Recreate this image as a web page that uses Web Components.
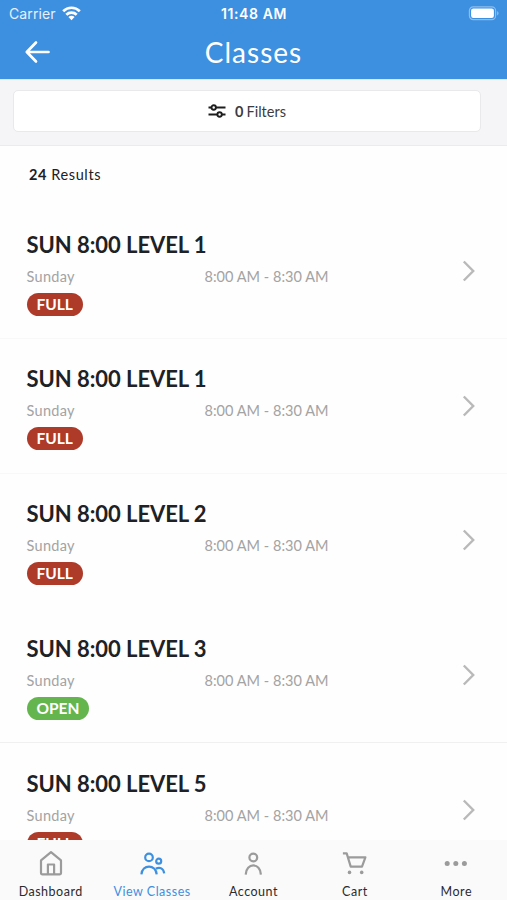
<!DOCTYPE html>
<html lang="en">
<head>
<meta charset="utf-8">
<meta name="viewport" content="width=device-width, initial-scale=1">
<title>Classes</title>
<style>
	html, body {
		height: 100%;
	}
	body {
		margin: 0;
		overflow: hidden;
		background: #fefefe;
		color: #202124;
		font-family: Lato, "Noto Sans", sans-serif;
	}
</style>
</head>
<body>
<classes-app>
	<status-bar slot="header" carrier="Carrier" time="11:48 AM"></status-bar>
	<page-header slot="header">Classes</page-header>
	<filter-bar slot="header" count="0"></filter-bar>
	<result-count count="24"></result-count>
	<class-row day="Sunday" time="8:00 AM - 8:30 AM" status="full">SUN 8:00 LEVEL 1</class-row>
	<class-row day="Sunday" time="8:00 AM - 8:30 AM" status="full">SUN 8:00 LEVEL 1</class-row>
	<class-row day="Sunday" time="8:00 AM - 8:30 AM" status="full" plain>SUN 8:00 LEVEL 2</class-row>
	<class-row day="Sunday" time="8:00 AM - 8:30 AM" status="open">SUN 8:00 LEVEL 3</class-row>
	<class-row day="Sunday" time="8:00 AM - 8:30 AM" status="full">SUN 8:00 LEVEL 5</class-row>
	<tab-bar slot="footer">
		<tab-item icon="home">Dashboard</tab-item>
		<tab-item icon="people" active>View Classes</tab-item>
		<tab-item icon="person">Account</tab-item>
		<tab-item icon="cart">Cart</tab-item>
		<tab-item icon="more">More</tab-item>
	</tab-bar>
</classes-app>

<script>
class ClassesApp extends HTMLElement {
	constructor() {
		super()
		this.attachShadow({ mode: 'open' })
		this.shadowRoot.innerHTML = `
		<slot name='header'></slot>
		<main><slot></slot></main>
		<slot name='footer'></slot>
		<style>
		:host {
			display: flex;
			flex-direction: column;
			height: 100vh;
		}
		main {
			flex: 1;
			min-height: 0;
			overflow: hidden;
		}
		</style>
		`
	}
}
window.customElements.define('classes-app', ClassesApp)

class StatusBar extends HTMLElement {
	constructor() {
		super()
		this.attachShadow({ mode: 'open' })
	}
	connectedCallback() {
		this.shadowRoot.innerHTML = `
		<div class='left'>
			<span class='carrier'>${this.getAttribute('carrier')}</span>
			<svg width='19' height='15' viewBox='0 0 19 15' fill='none' stroke='#fff' stroke-width='2.7'>
				<path d='M1.2 5.2C5.8 .6 13.2 .6 17.8 5.2'/>
				<path d='M4.3 8.7C7.2 5.9 11.8 5.9 14.7 8.7'/>
				<path d='M9.5 14.2L6.4 11C8.2 9.4 10.8 9.4 12.6 11Z' fill='#fff' stroke='none'/>
			</svg>
		</div>
		<span class='time'>${this.getAttribute('time')}</span>
		<svg class='battery' width='31' height='15' viewBox='0 0 31 15'>
			<rect x='1.4' y='.9' width='26.2' height='12.7' rx='3.8' fill='none' stroke='#8dbdec' stroke-width='1.2'/>
			<rect x='3.1' y='2.6' width='22.8' height='9.3' rx='2.2' fill='#fff'/>
			<path d='M29.1 5.2C31 5.8 31 8.8 29.1 9.4Z' fill='#8dbdec'/>
		</svg>
		<style>
		:host {
			display: grid;
			grid-template-columns: 1fr auto 1fr;
			align-items: center;
			height: 27px;
			padding: 0 8px 0 9px;
			box-sizing: border-box;
			background: #3d8fdf;
			color: #fff;
			font-family: Inter, "Liberation Sans", sans-serif;
			font-size: 14px;
		}
		.left {
			display: flex;
			align-items: center;
			gap: 6px;
		}
		.carrier {
			color: #e6f1fc;
			letter-spacing: .1px;
		}
		.time {
			font-size: 14px;
			font-weight: 600;
			letter-spacing: .6px;
		}
		.battery {
			justify-self: end;
		}
		</style>
		`
	}
}
window.customElements.define('status-bar', StatusBar)

class PageHeader extends HTMLElement {
	constructor() {
		super()
		this.attachShadow({ mode: 'open' })
		this.shadowRoot.innerHTML = `
		<svg width='26' height='24' viewBox='0 0 26 24' fill='none' stroke='#fff' stroke-width='2.7' stroke-linecap='round' stroke-linejoin='round'>
			<path d='M12 2.5L2.8 12L12 21.5M3 12H24.5'/>
		</svg>
		<h1><slot></slot></h1>
		<style>
		:host {
			display: grid;
			grid-template-columns: 1fr auto 1fr;
			align-items: center;
			height: 52px;
			padding: 0 24px 3px;
			box-sizing: border-box;
			background: #3d8fdf;
			color: #fff;
		}
		h1 {
			margin: 0;
			font-size: 28px;
			font-weight: 400;
			letter-spacing: 1px;
		}
		</style>
		`
	}
}
window.customElements.define('page-header', PageHeader)

class FilterBar extends HTMLElement {
	constructor() {
		super()
		this.attachShadow({ mode: 'open' })
	}
	connectedCallback() {
		this.shadowRoot.innerHTML = `
		<div class='button'>
			<svg width='18' height='14' viewBox='0 0 18 14' fill='#fff' stroke='#1d1d1d' stroke-width='1.9'>
				<path d='M.5 3.5H17.5M.5 10.5H17.5'/>
				<circle cx='5.7' cy='3.5' r='2.2'/>
				<circle cx='11.6' cy='10.5' r='2.2'/>
			</svg>
			<span><b>${this.getAttribute('count')}</b> <i>Filters</i></span>
		</div>
		<style>
		:host {
			display: block;
			height: 67px;
			padding: 10px 26px 13px 13px;
			box-sizing: border-box;
			border-top: 1px solid #d3eafa;
			border-bottom: 1px solid #ebebec;
			background: #f5f5f8;
		}
		.button {
			display: flex;
			align-items: center;
			justify-content: center;
			gap: 9px;
			height: 42px;
			box-sizing: border-box;
			border: 1px solid #e9e9ec;
			border-radius: 5px;
			background: #fff;
			color: #3c3c3f;
			font-size: 14.5px;
		}
		span {
			display: flex;
			gap: 3px;
		}
		i {
			font-style: normal;
		}
		</style>
		`
	}
}
window.customElements.define('filter-bar', FilterBar)

class ResultCount extends HTMLElement {
	constructor() {
		super()
		this.attachShadow({ mode: 'open' })
	}
	connectedCallback() {
		this.shadowRoot.innerHTML = `
		<b>${this.getAttribute('count')}</b> Results
		<style>
		:host {
			display: block;
			height: 58px;
			padding-left: 29px;
			box-sizing: border-box;
			line-height: 57px;
			font-size: 14.5px;
			letter-spacing: .6px;
		}
		</style>
		`
	}
}
window.customElements.define('result-count', ResultCount)

class ClassRow extends HTMLElement {
	constructor() {
		super()
		this.attachShadow({ mode: 'open' })
	}
	connectedCallback() {
		const status = this.getAttribute('status')
		this.shadowRoot.innerHTML = `
		<div class='info'>
			<h2><slot></slot></h2>
			<div class='when'>
				<span>${this.getAttribute('day')}</span>
				<span class='hours'>${this.getAttribute('time')}</span>
			</div>
			<span class='badge ${status}'>${status.toUpperCase()}</span>
		</div>
		<svg width='14' height='22' viewBox='0 0 14 22' fill='none' stroke='#b9b9b9' stroke-width='2.4'>
			<path d='M1.8 1.5L11.2 11L1.8 20.5'/>
		</svg>
		<style>
		:host {
			display: flex;
			align-items: center;
			justify-content: space-between;
			height: 134.75px;
			padding: 0 31px 0 26.5px;
			box-sizing: border-box;
			border-bottom: 1px solid #f8f8f8;
		}
		:host([status='open']) {
			border-bottom-color: #f0f0f0;
		}
		:host([plain]) {
			border-bottom-color: transparent;
		}
		.info {
			padding-top: 2.6px;
		}
		h2 {
			margin: 0;
			height: 32px;
			line-height: 32px;
			font-size: 22px;
			font-weight: 700;
			letter-spacing: -.05px;
			white-space: nowrap;
		}
		.when {
			display: grid;
			grid-template-columns: 178px auto;
			height: 32px;
			line-height: 32px;
			color: #a3a3a3;
			font-size: 14.5px;
			letter-spacing: .3px;
		}
		.hours {
			letter-spacing: .03px;
		}
		.badge {
			display: block;
			width: fit-content;
			height: 23px;
			padding: 0 10px;
			border-radius: 12px;
			line-height: 23px;
			color: #fff;
			font-size: 15.5px;
			font-weight: 700;
			letter-spacing: -.05px;
		}
		.full {
			background: #ae3a29;
		}
		.open {
			background: #65b54f;
		}
		</style>
		`
	}
}
window.customElements.define('class-row', ClassRow)

class TabBar extends HTMLElement {
	constructor() {
		super()
		this.attachShadow({ mode: 'open' })
		this.shadowRoot.innerHTML = `
		<slot></slot>
		<style>
		:host {
			display: grid;
			grid-template-columns: repeat(5, 1fr);
			height: 60px;
			background: #fafafa;
		}
		</style>
		`
	}
}
window.customElements.define('tab-bar', TabBar)

const icons = {
	home: `
		<path d='M4 10.4L14 2.2L24 10.4V22.8Q24 24.4 22.4 24.4H5.6Q4 24.4 4 22.8Z'/>
		<path d='M10.9 24V14.5H17.1V24'/>`,
	people: `
		<circle cx='11' cy='7.4' r='3.8'/>
		<circle cx='20.7' cy='11.2' r='2.5'/>
		<path d='M3.4 24.4C4 13.9 18 13.9 18.7 24.4'/>
		<path d='M17.8 18.8C21.8 16.4 25.6 18.6 26.2 23.4'/>`,
	person: `
		<circle cx='14.3' cy='7.5' r='3.9'/>
		<path d='M6.7 24.6C7 12.4 21.6 12.4 21.9 24.6'/>`,
	cart: `
		<path d='M1.9 3.4H5.7L9.7 16.6H21L24.4 7.4H7'/>
		<circle cx='8.5' cy='22.4' r='1.8' fill='currentColor' stroke='none'/>
		<circle cx='20.7' cy='22.4' r='1.8' fill='currentColor' stroke='none'/>`,
	more: `
		<g fill='currentColor' stroke='none'>
			<circle cx='5.2' cy='13.4' r='2.5'/>
			<circle cx='13.8' cy='13.4' r='2.5'/>
			<circle cx='22.4' cy='13.4' r='2.5'/>
		</g>`
}

class TabItem extends HTMLElement {
	constructor() {
		super()
		this.attachShadow({ mode: 'open' })
	}
	connectedCallback() {
		this.shadowRoot.innerHTML = `
		<svg width='28' height='27' viewBox='0 0 28 27' fill='none' stroke='currentColor' stroke-width='2.2' stroke-linejoin='round'>
			${icons[this.getAttribute('icon')]}
		</svg>
		<span><slot></slot></span>
		<style>
		:host {
			display: flex;
			flex-direction: column;
			align-items: center;
			padding-top: 10px;
			color: #2b2b2d;
			font-size: 12.5px;
			letter-spacing: .5px;
			white-space: nowrap;
		}
		svg {
			color: #9b9b9b;
		}
		span {
			margin-top: 5px;
			line-height: 19px;
		}
		:host([active]), :host([active]) svg {
			color: #3d8fdf;
		}
		</style>
		`
	}
}
window.customElements.define('tab-item', TabItem)
</script>
</body>
</html>
